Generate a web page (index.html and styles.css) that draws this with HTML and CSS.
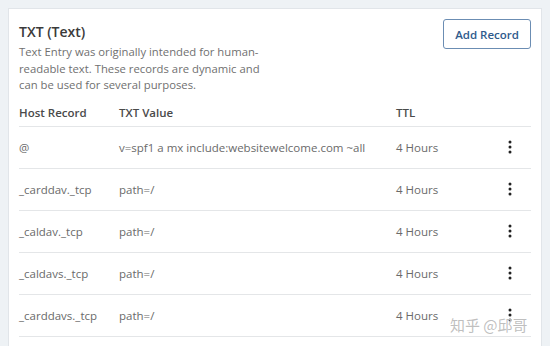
FILE: index.html
```html
<!DOCTYPE html>
<html lang="en">
<head>
    <meta charset="UTF-8">
    <meta name="viewport" content="width=device-width, initial-scale=1.0">
    <title>TXT Records</title>
    <link rel="stylesheet" href="styles.css">
</head>
<body>
    <div class="card">
        <!-- Section header -->
        <div class="card-head">
            <div class="intro">
                <h2>TXT (Text)</h2>
                <p>Text Entry was originally intended for human-readable text. These records are dynamic and can be used for several purposes.</p>
            </div>
            <button class="btn">Add Record</button>
        </div>

        <!-- Records -->
        <div class="records">
            <div class="row head">
                <div class="col host">Host Record</div>
                <div class="col value">TXT Value</div>
                <div class="col ttl">TTL</div>
                <div class="col menu"></div>
            </div>
            <div class="row">
                <div class="col host">@</div>
                <div class="col value">v=spf1 a mx include:websitewelcome.com ~all</div>
                <div class="col ttl">4 Hours</div>
                <div class="col menu"><svg width="4" height="14" viewBox="0 0 4 14"><circle cx="2" cy="2" r="1.5"/><circle cx="2" cy="7" r="1.5"/><circle cx="2" cy="12" r="1.5"/></svg></div>
            </div>
            <div class="row">
                <div class="col host">_carddav._tcp</div>
                <div class="col value">path=/</div>
                <div class="col ttl">4 Hours</div>
                <div class="col menu"><svg width="4" height="14" viewBox="0 0 4 14"><circle cx="2" cy="2" r="1.5"/><circle cx="2" cy="7" r="1.5"/><circle cx="2" cy="12" r="1.5"/></svg></div>
            </div>
            <div class="row">
                <div class="col host">_caldav._tcp</div>
                <div class="col value">path=/</div>
                <div class="col ttl">4 Hours</div>
                <div class="col menu"><svg width="4" height="14" viewBox="0 0 4 14"><circle cx="2" cy="2" r="1.5"/><circle cx="2" cy="7" r="1.5"/><circle cx="2" cy="12" r="1.5"/></svg></div>
            </div>
            <div class="row">
                <div class="col host">_caldavs._tcp</div>
                <div class="col value">path=/</div>
                <div class="col ttl">4 Hours</div>
                <div class="col menu"><svg width="4" height="14" viewBox="0 0 4 14"><circle cx="2" cy="2" r="1.5"/><circle cx="2" cy="7" r="1.5"/><circle cx="2" cy="12" r="1.5"/></svg></div>
            </div>
            <div class="row">
                <div class="col host">_carddavs._tcp</div>
                <div class="col value">path=/</div>
                <div class="col ttl">4 Hours</div>
                <div class="col menu"><svg width="4" height="14" viewBox="0 0 4 14"><circle cx="2" cy="2" r="1.5"/><circle cx="2" cy="7" r="1.5"/><circle cx="2" cy="12" r="1.5"/></svg></div>
            </div>
        </div>
    </div>

    <div class="watermark">知乎 @邱哥</div>
</body>
</html>
```

FILE: styles.css
```css
body {
    font-family: "Open Sans", "Noto Sans", sans-serif;
    margin: 0;
    padding: 8px 8px 0 8px;
    background-color: #eef2f5;
    overflow: hidden;
    height: 346px;
    box-sizing: border-box;
}
.card {
    background-color: #fff;
    border: 1px solid #e1e5e9;
    border-bottom: none;
    width: 534px;
    box-sizing: border-box;
    padding: 10px 10px 0 10px;
    min-height: 360px;
}
.card-head {
    display: flex;
    justify-content: space-between;
    align-items: flex-start;
}
.intro h2 {
    font-size: 14px;
    font-weight: 600;
    color: #3a3a3a;
    margin: 2px 0 0 0;
    line-height: 22px;
}
.intro p {
    font-size: 11.3px;
    color: #707070;
    margin: 1px 0 0 0;
    width: 250px;
    line-height: 16.5px;
}
.btn {
    font-family: "Open Sans", sans-serif;
    font-size: 11.5px;
    font-weight: 600;
    color: #2f5b8c;
    background-color: #fff;
    border: 1px solid #6b8db3;
    border-radius: 3px;
    width: 88px;
    height: 30px;
    margin-top: 0;
    padding: 0;
}
.records {
    margin-top: 5px;
}
.row {
    display: flex;
    align-items: center;
    height: 42px;
    border-bottom: 1px solid #e4e6e8;
    box-sizing: border-box;
    font-size: 11.5px;
    color: #6a6a6a;
}
.row.head {
    height: 28px;
    font-weight: 600;
    color: #4a4a4a;
}
.col.host {
    width: 100px;
}
.col.value {
    width: 277px;
}
.col.ttl {
    width: 112px;
}
.col.menu {
    display: flex;
    align-items: center;
}
.col.menu svg {
    fill: #222;
}
.watermark {
    position: absolute;
    left: 450px;
    top: 314px;
    font-family: "Noto Sans CJK SC", sans-serif;
    font-size: 15px;
    color: rgba(170, 170, 170, 0.75);
    text-shadow: 0 0 1px #fff;
}
```
